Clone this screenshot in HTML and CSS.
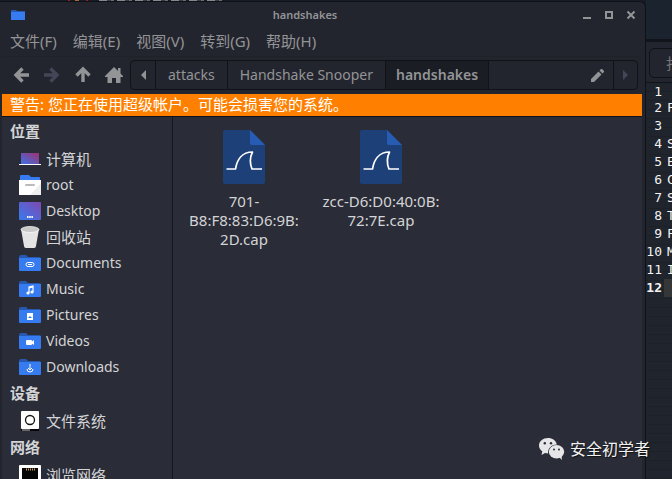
FILE: index.html
```html
<!DOCTYPE html>
<html lang="zh-CN">
<head>
<meta charset="utf-8">
<title>handshakes</title>
<link rel="stylesheet" href="styles.css">
</head>
<body>
<svg width="0" height="0" class="defs" aria-hidden="true">
  <defs>
    <linearGradient id="screen" x1="0" y1="1" x2="1" y2="0"><stop offset="0" stop-color="#3b72e8"/><stop offset="1" stop-color="#a03070"/></linearGradient>
    <linearGradient id="desk" x1="0" y1="1" x2="1" y2="0"><stop offset="0" stop-color="#367bf0"/><stop offset="1" stop-color="#8048b0"/></linearGradient>
    <symbol id="folder" viewBox="0 0 22 22"><path d="M0 5q0-2 2-2h5l2 2h11q2 0 2 2v10H0z" fill="#2759b0"/><path d="M0 6h22v12q0 1-1 1H1q-1 0-1-1z" fill="#367bf0"/></symbol>
    <symbol id="cap" viewBox="0 0 42 54"><path d="M2 0h25l15 15v37q0 2-2 2H2q-2 0-2-2V2q0-2 2-2z" fill="#1d4078"/><path d="M27 0l15 15H29q-2 0-2-2z" fill="#265cb3"/><path d="M3.500 39H12.500C14 30 19 22 29.500 22C27 27 27 34 29 39H39" fill="none" stroke="#fff" stroke-width="1.700" stroke-linejoin="round"/></symbol>
  </defs>
</svg>
<div class="desktop">
  <main class="window">
    <header class="titlebar">
      <svg class="app-icon" viewBox="0 0 14 10"><path d="M0 0h5l1 1h8v9H0z" fill="#2759b0"/><path d="M0 2h14v8H0z" fill="#367bf0"/></svg>
      <h1>handshakes</h1>
      <div class="controls">
        <button aria-label="最小化"><svg viewBox="0 0 10 10"><path d="M1 8h8" stroke-width="2"/></svg></button>
        <button aria-label="最大化"><svg viewBox="0 0 10 10"><path d="M2 2h6v6H2z" stroke-width="2"/></svg></button>
        <button aria-label="关闭"><svg viewBox="0 0 10 10"><path d="M1.500 1.500l7 7m0-7l-7 7" stroke-width="2"/></svg></button>
      </div>
    </header>
    <nav class="menubar">
      <button>文件(F)</button><button>编辑(E)</button><button>视图(V)</button><button>转到(G)</button><button>帮助(H)</button>
    </nav>
    <div class="toolbar">
      <div class="nav-buttons">
        <button aria-label="后退"><svg viewBox="0 0 18 18"><path d="M17 9H5M10.500 2.500L4 9l6.500 6.500" fill="none" stroke="currentColor" stroke-width="3.400"/></svg></button>
        <button aria-label="前进" disabled><svg viewBox="0 0 18 18"><path d="M1 9h12M7.500 2.500L14 9l-6.500 6.500" fill="none" stroke="currentColor" stroke-width="3.400"/></svg></button>
        <button aria-label="上级"><svg viewBox="0 0 18 18"><path d="M9 16V4M2.500 9.500L9 3l6.500 6.500" fill="none" stroke="currentColor" stroke-width="3.400"/></svg></button>
        <button aria-label="主目录"><svg viewBox="0 0 18 18"><path d="M9 1l4 4V2h2.500v5.500L18 10v1h-2.500v6H11v-5H7v5H2.500v-6H0v-1z" fill="currentColor"/></svg></button>
      </div>
      <div class="pathbar">
        <button class="step" aria-label="向左"><svg viewBox="0 0 6 10"><path d="M6 0v10L1 5z" fill="currentColor"/></svg></button>
        <button class="crumb">attacks</button>
        <button class="crumb">Handshake Snooper</button>
        <button class="crumb current">handshakes</button>
        <button class="edit" aria-label="编辑路径"><svg viewBox="0 0 13 13"><path d="M0 13v-3l7.500-7.500 3 3L3 13zM8.500 1.500L10 0h1l2 2v1l-1.500 1.500z" fill="currentColor"/></svg></button>
        <button class="step" aria-label="向右" disabled><svg viewBox="0 0 6 10"><path d="M0 0v10l5-5z" fill="currentColor"/></svg></button>
      </div>
    </div>
    <p class="warning">警告: 您正在使用超级帐户。可能会损害您的系统。</p>
    <div class="content">
      <aside class="sidebar">
        <h2>位置</h2>
        <ul>
          <li><a href="#"><svg viewBox="0 0 22 22"><path d="M2 5h18v11H2z" fill="url(#screen)"/><path d="M0 16h22v1H0z" fill="#fff"/></svg>计算机</a></li>
          <li><a href="#" lang="en"><svg viewBox="0 0 22 22"><path d="M1 7V2q0-1 1-1h8l2 2h8q1 0 1 1v3z" fill="#367bf0"/><path d="M0 6h22v15H0z" fill="#fff"/><path d="M22 9v12H11z" fill="#eee"/><path d="M7 11h8" stroke="#bbb" stroke-width="2" stroke-linecap="round"/></svg>root</a></li>
          <li><a href="#" lang="en"><svg viewBox="0 0 22 22"><rect y="2" width="22" height="18" rx="1" fill="url(#desk)"/><path d="M8 17h6" stroke="#fff" stroke-width="2" stroke-dasharray="1.500 .7"/></svg>Desktop</a></li>
          <li><a href="#"><svg viewBox="0 0 22 22"><path d="M2 3h18l-3 17q0 2-2 2H7q-2 0-2-2z" fill="#e4e4e4"/><ellipse cx="11" cy="3.500" rx="9" ry="3" fill="#c8c8c8" stroke="#fff" stroke-width=".7"/></svg>回收站</a></li>
          <li><a href="#" lang="en"><svg viewBox="0 0 22 22"><use href="#folder"/><path d="M9 14.500h4a2 2 0 0 0 0-4H9a1.500 1.500 0 0 0 0 4M9 12.500h4" fill="none" stroke="#fff"/></svg>Documents</a></li>
          <li><a href="#" lang="en"><svg viewBox="0 0 22 22"><use href="#folder"/><path d="M10 15V9l4-1v6M10 10l4-1" fill="none" stroke="#fff" stroke-width="1.200"/><circle cx="9" cy="15" r="1.600" fill="#fff"/><circle cx="13" cy="14" r="1.600" fill="#fff"/></svg>Music</a></li>
          <li><a href="#" lang="en"><svg viewBox="0 0 22 22"><use href="#folder"/><rect x="8" y="9" width="6" height="7" fill="#fff"/><path d="M9 14l2-2 2 2z" fill="#367bf0"/></svg>Pictures</a></li>
          <li><a href="#" lang="en"><svg viewBox="0 0 22 22"><use href="#folder"/><rect x="7" y="10" width="6" height="5" rx="1" fill="#fff"/><path d="M12 12l3-2v5l-3-2z" fill="#fff"/></svg>Videos</a></li>
          <li><a href="#" lang="en"><svg viewBox="0 0 22 22"><use href="#folder"/><path d="M11 8v6M9 12l2 2 2-2M8 13q0 3 3 3t3-3" fill="none" stroke="#fff"/></svg>Downloads</a></li>
        </ul>
        <h2>设备</h2>
        <ul>
          <li><a href="#"><svg viewBox="0 0 22 22"><rect x="2" y="1" width="18" height="18" rx="1" fill="#fff"/><circle cx="11" cy="10" r="4.500" fill="none" stroke="#111" stroke-width="1.300"/><path d="M2 19h18v2H2z" fill="#050505"/><path d="M3 20h8" stroke="#ccc"/></svg>文件系统</a></li>
        </ul>
        <h2>网络</h2>
        <ul>
          <li><a href="#"><svg viewBox="0 0 22 22"><rect y="1" width="22" height="21" rx="1" fill="#fff"/><path d="M3 4h16v18H3z" fill="#050505"/><path d="M7 5.500h9" stroke="#c8a050" stroke-width="2" stroke-dasharray="1 1"/></svg>浏览网络</a></li>
        </ul>
      </aside>
      <section class="files">
        <a class="file" href="#"><svg><use href="#cap"/></svg><span>701-<br>B8:F8:83:D6:9B:<br>2D.cap</span></a>
        <a class="file" href="#"><svg><use href="#cap"/></svg><span>zcc-D6:D0:40:0B:<br>72:7E.cap</span></a>
      </section>
    </div>
  </main>
  <aside class="editor">
    <div class="editor-bar"><button>打开</button></div>
    <ol class="code">
      <li><span></span></li><li><span>F</span></li><li><span></span></li><li><span>S</span></li><li><span>E</span></li><li><span>C</span></li><li><span>S</span></li><li><span>T</span></li><li><span>F</span></li><li><span>M</span></li><li><span>I</span></li><li class="active"><span></span></li>
    </ol>
  </aside>
</div>
<div class="watermark">
  <svg viewBox="0 0 26 22"><path d="M9 0C4 0 0 3.300 0 7.500c0 2.400 1.300 4.400 3.300 5.800L2.500 17l3.500-2 3 .5C9 10 12 7 17.800 6.500 17 2.500 13.500 0 9 0z" fill="#e6e6e8"/><ellipse cx="17.500" cy="13.700" rx="7.700" ry="6.700" fill="#e6e6e8"/><path d="M20 19l3 3-.5-4z" fill="#e6e6e8"/><g fill="#2a2c36"><circle cx="5.800" cy="5.200" r="1.200"/><circle cx="12" cy="5.200" r="1.200"/><circle cx="15" cy="11.600" r="1"/><circle cx="20" cy="11.600" r="1"/></g></svg>
  <span>安全初学者</span>
</div>
</body>
</html>
```
FILE: styles.css
```css
* { box-sizing: border-box; }
body {
  margin: 0;
  height: 100vh;
  overflow: hidden;
  background:
    linear-gradient(90deg, transparent 68px, #a01c24 68px 70px, transparent 70px 75px, #a06a38 75px 79px, transparent 79px 86px, #a01c24 86px 88px, transparent 88px) 0 0 / 100% 1px no-repeat,
    repeating-linear-gradient(90deg, #85888c 0 8px, #3a4048 8px 12px, #6a6c70 12px 15px, transparent 15px 18px) 99px 0 / 123px 1px no-repeat,
    #171d26;
  color: #d3d4d6;
  font: 15px/20px "Noto Sans", "Noto Sans CJK SC", sans-serif;
}
button {
  padding: 0;
  border: 0;
  background: none;
  color: inherit;
  font: inherit;
}
a { color: inherit; text-decoration: none; }
h1, h2, p, ul, ol { margin: 0; padding: 0; list-style: none; }
.defs { position: absolute; }
.desktop { display: grid; grid-template-columns: 1fr 26px; height: 100%; }
.window {
  display: flex;
  flex-direction: column;
  min-height: 0;
  margin-top: 1px;
  border: solid #0f1118;
  border-width: 1px 1px 0 0;
  border-radius: 0 6px 0 0;
  padding: 0 3px 0 2px;
  background: #23252e;
  color: #939496;
}
.titlebar {
  display: grid;
  grid-template-columns: 46px 1fr 80px;
  align-items: center;
  height: 26px;
  flex: none;
}
.app-icon { width: 14px; height: 10px; margin-left: 9px; }
h1 { font-size: 11px; font-weight: 600; text-align: center; }
.controls { display: flex; justify-content: flex-end; gap: 12px; padding-right: 6px; }
.controls button { display: flex; }
.controls svg { width: 10px; height: 10px; fill: none; stroke: #939496; }
.menubar { display: flex; flex: none; align-items: flex-start; gap: 16px; height: 28px; padding: 3px 0 0 8px; }
.toolbar { display: flex; flex: none; padding: 3px 4px 4px 10px; border-top: 1px solid #20222a; }
.nav-buttons { display: flex; align-items: center; gap: 13px; padding-right: 7px; }
.nav-buttons button, .nav-buttons svg { display: block; width: 18px; height: 18px; }
.nav-buttons button:disabled { color: #434657; }
.pathbar {
  display: flex;
  flex: 1;
  height: 30px;
  border: 1px solid #101218;
  border-radius: 4px;
  font-size: 14px;
}
.pathbar button { border-right: 1px solid #101218; }
.pathbar button:last-child { border: 0; }
.step { display: grid; place-items: center; width: 25px; }
.step svg { width: 6px; height: 10px; }
.step:disabled { width: 23px; color: #434657; }
.crumb { padding: 0 12px; }
.crumb.current { padding: 0 10px; background: #1a1d24; font-weight: 600; }
.edit { display: flex; flex: 1; justify-content: flex-end; align-items: center; }
.pathbar .edit { padding-right: 9px; }
.edit svg { width: 13px; height: 13px; }
.warning {
  flex: none;
  height: 23px;
  padding: 0 8px;
  border-bottom: 1px solid #11131a;
  background: #ff8000;
  color: #fff;
  line-height: 20px;
}
.content {
  display: grid;
  grid-template-columns: 171px 1fr;
  flex: 1;
  min-height: 0;
  background: #2a2c37;
  color: #d3d4d6;
}
.sidebar { overflow: hidden; border-right: 1px solid #15171e; }
h2 { padding: 0 8px; font-size: 15px; line-height: 28px; font-weight: 600; }
.sidebar a { display: flex; align-items: center; gap: 5px; height: 26px; padding: 1px 0 0 17px; }
.sidebar a:lang(en) { padding-top: 2px; font-size: 14px; }
.sidebar svg { width: 22px; height: 22px; flex: none; }
.files { display: flex; align-items: flex-start; gap: 9px; padding: 13px 7px; }
.file { display: flex; flex-direction: column; align-items: center; gap: 8px; width: 128px; text-align: center; line-height: 19px; white-space: nowrap; }
.file svg { width: 42px; height: 54px; }
.editor { overflow: hidden; background: #202630; color: #f2f2f2; }
.editor-bar { height: 83px; border-bottom: 1px solid #10141b; background: linear-gradient(#1b232e 39px, #11141b 39px, #11141b 42px, #23252e 42px); }
.editor-bar button { width: 80px; height: 30px; margin: 48px 0 0 3px; padding-left: 16px; border: 1px solid #101218; border-radius: 5px; text-align: left; color: #73757b; }
.code { counter-reset: line; height: 100%; font: 13px/18px "DejaVu Sans Mono", monospace; background: repeating-linear-gradient(#20242c 0 8px, #1c2027 8px 9px); }
.code li { display: grid; grid-template-columns: 16px 1fr; gap: 5px; height: 18px; counter-increment: line; }
.code li:first-child { height: 16px; }
.code li::before { content: counter(line); text-align: right; }
.code .active { font-weight: 700; background: linear-gradient(90deg, transparent 18px, #353638 18px); }
.watermark {
  position: absolute;
  right: 22px;
  bottom: 18px;
  display: flex;
  align-items: center;
  gap: 5px;
  color: #f2f2f2;
  font-size: 16px;
  line-height: 24px;
  text-shadow: 1px 1px 1px #111;
}
.watermark svg { width: 26px; height: 22px; }
```
